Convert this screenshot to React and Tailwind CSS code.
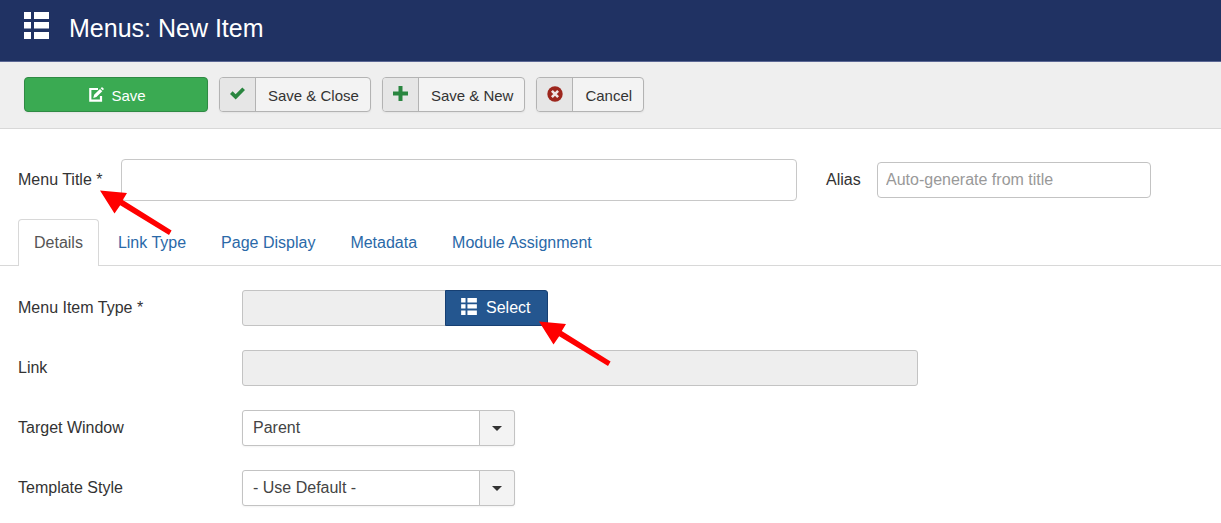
import React from "react";

function ListIcon({ className }) {
  return (
    <svg viewBox="0 0 25 27" className={className} fill="currentColor" aria-hidden="true">
      <path d="M0 0h7v7H0zM10 0h15v7H10zM0 10h7v6.5H0zM10 10h15v6.5H10zM0 20h7v7H0zM10 20h15v7H10z" />
    </svg>
  );
}

function EditIcon() {
  return (
    <svg viewBox="0 0 15 15" className="size-[15px]" aria-hidden="true">
      <path d="M9 2H1.3v11.7H12V9" fill="none" stroke="currentColor" strokeWidth="2.2" />
      <path d="M4.3 11l.8-3.2 5.9-5.9 2.3 2.3-5.9 5.9zM11.6 1.3l.9-.9c.3-.3.7-.3 1 0l1.1 1.1c.3.3.3.7 0 1l-.8.8z" fill="currentColor" />
    </svg>
  );
}

function CheckIcon() {
  return (
    <svg viewBox="0 0 15 13" className="h-[13px] w-[15px] text-[#2a8640]" aria-hidden="true">
      <path d="M0 6.9L2.6 4.3l3 3L12.3.4 15 2.9 5.7 12.6z" fill="currentColor" />
    </svg>
  );
}

function PlusIcon() {
  return (
    <svg viewBox="0 0 15 15" className="size-[15px] text-[#2a8640]" aria-hidden="true">
      <path d="M5.500 0h4v5.500H15v4H9.500V15h-4V9.500H0v-4h5.500z" fill="currentColor" />
    </svg>
  );
}

function CancelIcon() {
  return (
    <svg viewBox="0 0 16 16" className="size-4" aria-hidden="true">
      <circle cx="8" cy="8" r="7.700" fill="#9d261d" />
      <path d="M4.900 4.900l6.200 6.200M11.100 4.900l-6.200 6.200" stroke="#f0e4e3" strokeWidth="2.600" />
    </svg>
  );
}

function Arrow({ className }) {
  return (
    <svg viewBox="0 0 72 46" className={"pointer-events-none absolute z-10 h-[46px] w-[72px] " + className} aria-hidden="true">
      <path d="M0 .6L27 2.900 22.800 9.900 71.600 40.400 69 45 20.200 15.200 14.500 23.500z" fill="#ff0000" />
    </svg>
  );
}

function ToolbarButton({ icon, children }) {
  return (
    <button
      type="button"
      className="flex h-[35px] items-stretch overflow-hidden rounded-[4px] border border-[#b3b3b3] bg-[#f3f3f3] text-[15px] text-[#333] shadow-[0_1px_2px_rgba(0,0,0,0.05)]"
    >
      <span className="flex w-9 items-center justify-center border-r border-[#b3b3b3] bg-[#e6e6e6] pb-0.5">{icon}</span>
      <span className="flex items-center pt-0.5 pr-[11px] pl-3">{children}</span>
    </button>
  );
}

function Field({ id, label, children }) {
  return (
    <div className="flex h-9 items-center">
      <label htmlFor={id} className="w-[224px] shrink-0">
        {label}
      </label>
      {children}
    </div>
  );
}

function Dropdown({ id, value }) {
  return (
    <div className="grid h-9 w-[273px] grid-cols-[1fr_36px]">
      <select
        id={id}
        defaultValue={value}
        className="col-span-2 col-start-1 row-start-1 appearance-none rounded-[3px] border border-[#c3c3c3] bg-white pl-[10px] text-[#444] shadow-[0_1px_2px_rgba(0,0,0,0.05)]"
      >
        <option>{value}</option>
      </select>
      <span className="pointer-events-none z-[1] col-start-2 row-start-1 flex items-center justify-center rounded-r-[3px] border border-[#c3c3c3] bg-[#f3f3f3]">
        <svg viewBox="0 0 10 5" className="h-[5px] w-[10px]" aria-hidden="true">
          <path d="M0 0h10L5 5z" fill="#333" />
        </svg>
      </span>
    </div>
  );
}

const tabs = ["Link Type", "Page Display", "Metadata", "Module Assignment"];

export default function App() {
  return (
    <div className="min-h-screen bg-white font-['Liberation_Sans',Arial,sans-serif] text-[16px] leading-5 text-[#333]">
      <header className="flex h-[62px] items-start gap-5 border-b border-[#5b6794] bg-[#203263] px-6 text-white">
        <ListIcon className="mt-3 h-[27px] w-[25px]" />
        <h1 className="pt-3 text-[25px] leading-8">Menus: New Item</h1>
      </header>

      <div className="flex gap-[11px] border-b border-[#d8d8d8] bg-[#efefef] px-6 pt-[15px] pb-4">
        <button
          type="button"
          className="flex h-[35px] w-[184px] items-center justify-center gap-[7px] rounded-[4px] border border-[#2f8a44] bg-[#3aaa52] pl-[3px] text-[15px] text-white shadow-[0_1px_2px_rgba(0,0,0,0.05)]"
        >
          <EditIcon />
          <span className="pt-0.5">Save</span>
        </button>
        <ToolbarButton icon={<CheckIcon />}>Save &amp; Close</ToolbarButton>
        <ToolbarButton icon={<PlusIcon />}>Save &amp; New</ToolbarButton>
        <ToolbarButton icon={<CancelIcon />}>Cancel</ToolbarButton>
      </div>

      <main>
        <div className="flex items-center pt-[30px] pr-[70px] pl-[18px]">
          <div className="relative w-[103px] shrink-0">
            <label htmlFor="title">Menu Title *</label>
            <Arrow className="top-5 left-[82px]" />
          </div>
          <input id="title" type="text" className="h-[42px] min-w-0 flex-1 rounded-[4px] border border-[#c8c8c8] px-2" />
          <label htmlFor="alias" className="ml-[29px] w-[51px] shrink-0">
            Alias
          </label>
          <input
            id="alias"
            type="text"
            placeholder="Auto-generate from title"
            className="h-9 w-[274px] rounded-[4px] border border-[#c3c3c3] px-2 placeholder:text-[#999]"
          />
        </div>

        <nav className="mt-[18px] flex border-b border-[#d8d8d8] pl-[18px]">
          <a href="#details" className="-mb-px h-[47px] rounded-t-[4px] border border-b-0 border-[#d8d8d8] bg-white px-[15px] pt-[13px] text-[#555]">
            Details
          </a>
          <div className="flex gap-[35px] pt-[14px] pl-[19px]">
            {tabs.map((tab) => (
              <a key={tab} href="#tab" className="text-[#2a69a8]">
                {tab}
              </a>
            ))}
          </div>
        </nav>

        <form className="flex flex-col gap-6 px-[18px] pt-6 pb-4">
          <Field id="type" label="Menu Item Type *">
            <input id="type" type="text" readOnly className="h-9 w-[204px] rounded-l-[3px] border border-[#c3c3c3] bg-[#eee] px-2" />
            <div className="relative -ml-px">
              <button
                type="button"
                className="flex h-9 w-[103px] items-center gap-[9px] rounded-r-[3px] border border-[#163f72] bg-[#24568f] pl-[15px] text-white"
              >
                <ListIcon className="mb-1 h-[17px] w-4" />
                Select
              </button>
              <Arrow className="top-[31px] left-[94px]" />
            </div>
          </Field>
          <Field id="link" label="Link">
            <input id="link" type="text" readOnly className="h-9 min-w-0 max-w-[676px] flex-1 rounded-[3px] border border-[#c3c3c3] bg-[#eee] px-2" />
          </Field>
          <Field id="target" label="Target Window">
            <Dropdown id="target" value="Parent" />
          </Field>
          <Field id="style" label="Template Style">
            <Dropdown id="style" value="- Use Default -" />
          </Field>
        </form>
      </main>
    </div>
  );
}
